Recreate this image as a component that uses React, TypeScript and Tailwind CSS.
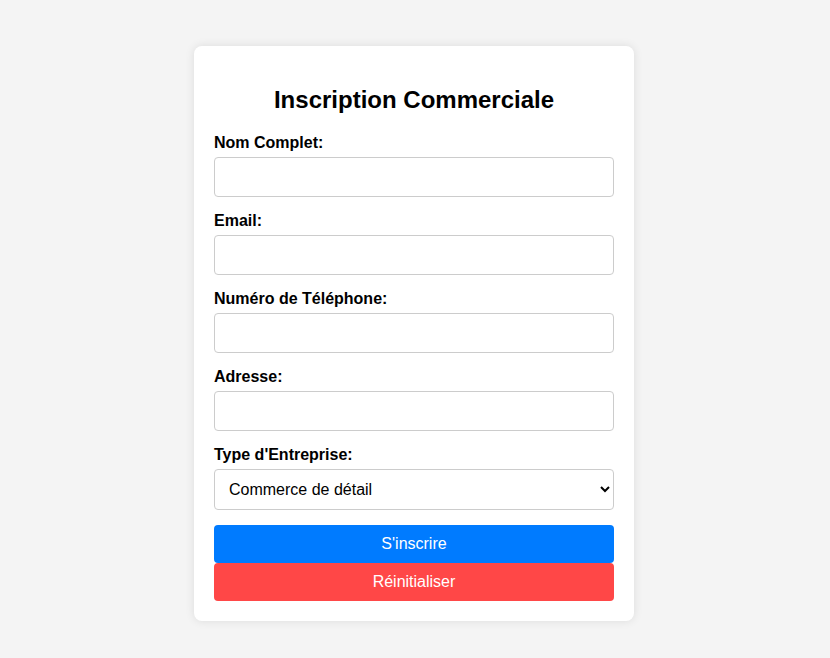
import React, { useState } from "react";

const fieldClass =
    "block w-full h-[40px] px-[10px] mb-[15px] border border-[#cccccc] rounded-[4px] bg-white text-[16px] text-black outline-none";
const labelClass = "block text-[16px] leading-[18px] font-bold mb-[5px]";

export default function App() {
    const [form, setForm] = useState({
        nom: "",
        email: "",
        tel: "",
        adresse: "",
        type: "detail",
    });

    const update = (key: keyof typeof form) => (e: React.ChangeEvent<HTMLInputElement | HTMLSelectElement>) =>
        setForm({ ...form, [key]: e.target.value });

    const reset = () => setForm({ nom: "", email: "", tel: "", adresse: "", type: "detail" });

    return (
        <div className="min-h-[658px] bg-[#f4f4f4] pt-[46px] flex justify-center pr-[2px] font-['Liberation_Sans',Arial,sans-serif] text-black">
            <form
                className="w-[440px] h-fit bg-white rounded-[8px] p-[20px] shadow-[0_0_10px_rgba(0,0,0,0.1)]"
                onSubmit={(e) => e.preventDefault()}
            >
                <h2 className="text-[24px] leading-[28px] font-bold text-center my-[20px]">Inscription Commerciale</h2>

                <label className={labelClass}>Nom Complet:</label>
                <input className={fieldClass} value={form.nom} onChange={update("nom")} />

                <label className={labelClass}>Email:</label>
                <input type="email" className={fieldClass} value={form.email} onChange={update("email")} />

                <label className={labelClass}>Numéro de Téléphone:</label>
                <input type="tel" className={fieldClass} value={form.tel} onChange={update("tel")} />

                <label className={labelClass}>Adresse:</label>
                <input className={fieldClass} value={form.adresse} onChange={update("adresse")} />

                <label className={labelClass}>Type d'Entreprise:</label>
                <select
                    className="block w-full h-[41px] px-[10px] mb-[15px] border border-[#cccccc] rounded-[4px] bg-white text-[16px] text-black outline-none appearance-auto"
                    value={form.type}
                    onChange={update("type")}
                >
                    <option value="detail">Commerce de détail</option>
                    <option value="gros">Commerce de gros</option>
                    <option value="services">Services</option>
                </select>

                <button
                    type="submit"
                    className="block w-full h-[38px] bg-[#007bff] text-white text-[16px] rounded-[4px]"
                >
                    S'inscrire
                </button>
                <button
                    type="button"
                    onClick={reset}
                    className="block w-full h-[38px] bg-[#ff4747] text-white text-[16px] rounded-[4px]"
                >
                    Réinitialiser
                </button>
            </form>
        </div>
    );
}
